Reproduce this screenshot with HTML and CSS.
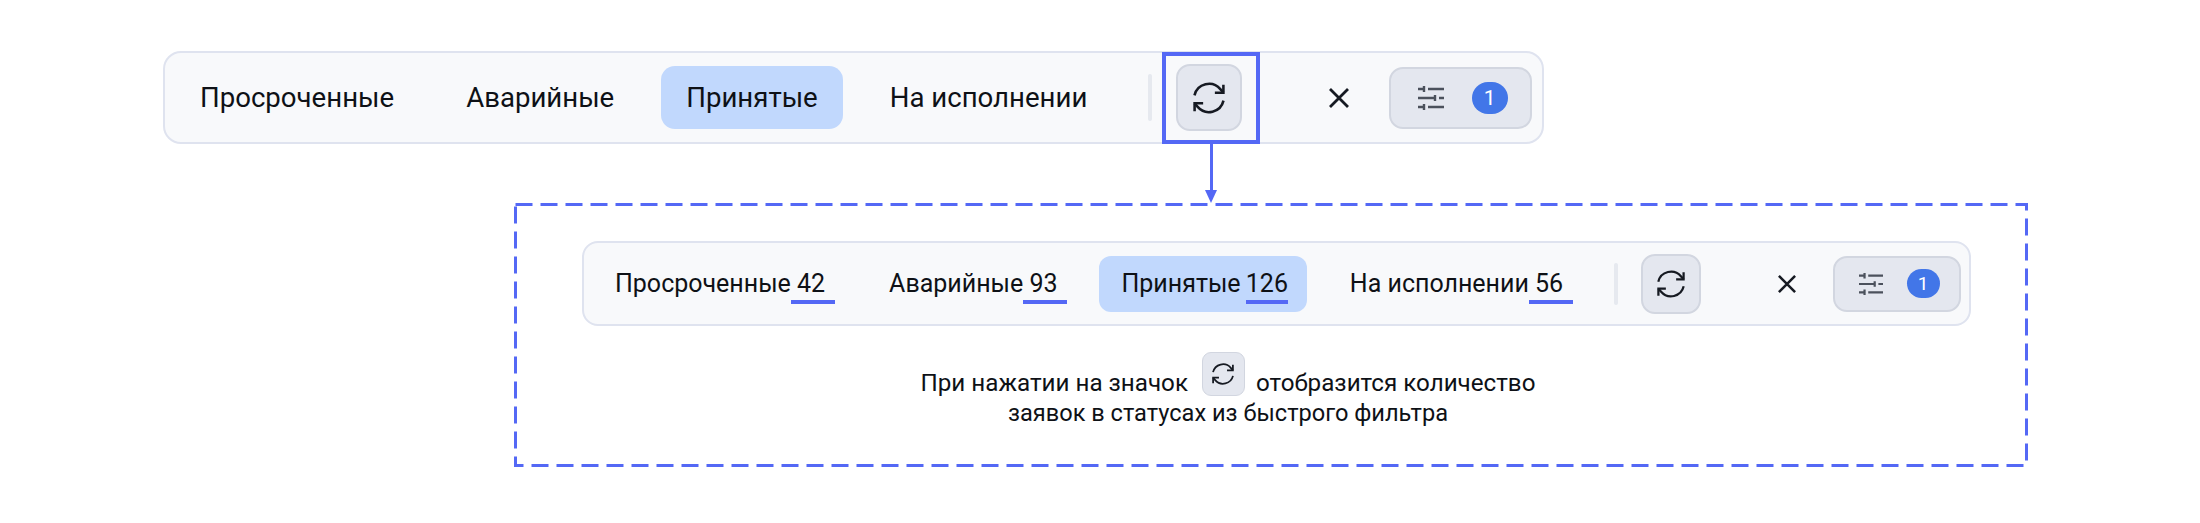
FILE: index.html
```html
<!DOCTYPE html>
<html lang="ru">

<head>
    <meta charset="UTF-8">
    <title>Быстрый фильтр</title>
    <link rel="stylesheet" href="styles.css">
</head>

<body>
    <svg class="icon-defs" width="0" height="0">
        <symbol id="icon-refresh" viewBox="0 0 30 30">
            <path d="M1.4 12.5A14 14 0 0 1 25.6 6.6L28.5 10" />
            <path d="M28.6 17.5A14 14 0 0 1 4.4 23.4L1.5 20" />
            <path d="M28.5 2.5V10H20.5" />
            <path d="M1.5 27.5V20H9.5" />
        </symbol>
        <symbol id="icon-filter" viewBox="0 0 26 26">
            <path d="M0 4H6M6 1V7M10 4H26" />
            <path d="M0 13H17M17 10V16M21 13H26" />
            <path d="M0 22H6M6 19V25M10 22H26" />
        </symbol>
        <symbol id="icon-close" viewBox="0 0 20 20">
            <path d="M1 1L19 19M19 1L1 19" />
        </symbol>
    </svg>

    <div class="bar">
        <div class="tab">Просроченные</div>
        <div class="tab">Аварийные</div>
        <div class="tab active">Принятые</div>
        <div class="tab">На исполнении</div>
        <div class="divider"></div>
        <div class="btn-refresh"><svg class="icon-refresh"><use href="#icon-refresh" /></svg></div>
        <div class="btn-close"><svg class="icon-close"><use href="#icon-close" /></svg></div>
        <div class="btn-filter">
            <svg class="icon-filter"><use href="#icon-filter" /></svg>
            <span class="badge">1</span>
        </div>
        <div class="highlight"></div>
        <div class="arrow"></div>
    </div>

    <div class="result">
        <svg class="dashes" width="1514" height="264">
            <rect x="1.5" y="1.5" width="1511" height="261" />
        </svg>
        <div class="bar small">
            <div class="tab">Просроченные <span class="count">42</span></div>
            <div class="tab">Аварийные <span class="count">93</span></div>
            <div class="tab active">Принятые <span class="count">126</span></div>
            <div class="tab">На исполнении <span class="count">56</span></div>
            <div class="divider"></div>
            <div class="btn-refresh"><svg class="icon-refresh"><use href="#icon-refresh" /></svg></div>
            <div class="btn-close"><svg class="icon-close"><use href="#icon-close" /></svg></div>
            <div class="btn-filter">
                <svg class="icon-filter"><use href="#icon-filter" /></svg>
                <span class="badge">1</span>
            </div>
        </div>
        <p class="note">
            <span class="note-first">При нажатии на значок
            <span class="mini-refresh"><svg class="icon-refresh"><use href="#icon-refresh" /></svg></span>
            отобразится количество</span><br>
            заявок в статусах из быстрого фильтра
        </p>
    </div>
</body>

</html>
```

FILE: styles.css
```css
body {
    margin: 0;
    background-color: #ffffff;
    color: #0e1116;
    font-family: Roboto, "Liberation Sans", sans-serif;
}

.icon-defs {
    position: absolute;
}

symbol path {
    fill: none;
    stroke: currentColor;
    stroke-width: 2.4;
}

#icon-close path {
    stroke-width: 2.8;
}

.bar {
    position: relative;
    display: flex;
    align-items: center;
    box-sizing: border-box;
    width: 1381px;
    height: 93px;
    margin: 51px 0 0 163px;
    padding: 0 10px 0 10px;
    background-color: #f8f9fb;
    border: 2px solid #dfe3ef;
    border-radius: 18px;
}

.tab {
    height: 63px;
    padding: 0 25px;
    margin-right: 22px;
    font-size: 27.6px;
    line-height: 63px;
    white-space: nowrap;
    border-radius: 14px;
}

.tab.active {
    background-color: #c1d8fd;
}

.divider {
    width: 4px;
    height: 47px;
    margin: 0 24px 0 14px;
    background-color: #e6e9ef;
    border-radius: 2px;
}

.btn-refresh {
    display: flex;
    align-items: center;
    justify-content: center;
    box-sizing: border-box;
    width: 67px;
    height: 67px;
    background-color: #e4e7ef;
    border: 2px solid #d2d6e0;
    border-radius: 14px;
}

.icon-refresh {
    width: 32px;
    height: 32px;
    color: #161a22;
}

.btn-close {
    display: flex;
    box-sizing: border-box;
    width: 147px;
    padding-left: 87px;
    color: #161a22;
}

.icon-close {
    width: 20px;
    height: 20px;
}

.btn-filter {
    display: flex;
    align-items: center;
    box-sizing: border-box;
    width: 145px;
    height: 62px;
    padding-left: 27px;
    background-color: #e4e7ef;
    border: 2px solid #d2d6e0;
    border-radius: 14px;
}

.icon-filter {
    width: 26px;
    height: 26px;
    color: #4b515c;
}

.badge {
    display: flex;
    align-items: center;
    justify-content: center;
    width: 36px;
    height: 32px;
    margin-left: 28px;
    color: #ffffff;
    background-color: #4276e8;
    border-radius: 18px;
    font-size: 21px;
}

.highlight {
    position: absolute;
    left: 997px;
    top: -1px;
    width: 98px;
    height: 92px;
    box-sizing: border-box;
    border: 4px solid #5468f5;
}

.arrow {
    position: absolute;
    left: 1045px;
    top: 91px;
    width: 3px;
    height: 46px;
    background-color: #5468f5;
}

.arrow::after {
    content: "";
    position: absolute;
    left: -5px;
    bottom: -13px;
    border-left: 6.5px solid transparent;
    border-right: 6.5px solid transparent;
    border-top: 13px solid #5468f5;
}

.result {
    position: relative;
    box-sizing: border-box;
    width: 1514px;
    height: 264px;
    margin: 59px 0 0 514px;
    padding: 38px 0 0 68px;
}

.dashes {
    position: absolute;
    left: 0;
    top: 0;
}

.dashes rect {
    fill: none;
    stroke: #5468f5;
    stroke-width: 3;
    stroke-dasharray: 17 8;
}

.bar.small {
    width: 1389px;
    height: 85px;
    margin: 0;
    padding: 0 8px 0 9px;
    border-radius: 16px;
}

.small .tab {
    height: 56px;
    padding: 0 18px 0 22px;
    margin-right: 14px;
    font-size: 25px;
    line-height: 56px;
    border-radius: 12px;
}

.small .tab.active {
    padding-right: 19px;
    margin-right: 21px;
}

.count {
    position: relative;
    display: inline-block;
    box-sizing: border-box;
    width: 44px;
    padding-right: 4px;
    margin-left: -6px;
    text-align: center;
}

.active .count {
    width: 42px;
    padding-right: 0;
    margin-left: -1px;
}

.count::after {
    content: "";
    position: absolute;
    left: 0;
    right: 0;
    bottom: 8px;
    height: 4px;
    background-color: #5468f5;
}

.small .divider {
    height: 42px;
    margin: 0 23px 0 9px;
}

.small .btn-refresh {
    width: 60px;
    height: 60px;
}

.small .icon-refresh {
    width: 28px;
    height: 28px;
}

.small .btn-close {
    width: 132px;
    padding-left: 77px;
}

.small .btn-filter {
    width: 129px;
    height: 56px;
    padding-left: 24px;
}

.small .icon-close {
    width: 18px;
    height: 18px;
}

.small .icon-filter {
    width: 24px;
    height: 24px;
}

.small .badge {
    width: 33px;
    height: 29px;
    margin-left: 24px;
    font-size: 19px;
}

.note {
    width: 640px;
    margin: 42px 0 0 326px;
    font-size: 23.6px;
    line-height: 30px;
    text-align: center;
}

.note-first {
    font-size: 24.2px;
}

.mini-refresh {
    display: inline-flex;
    align-items: center;
    justify-content: center;
    box-sizing: border-box;
    width: 43px;
    height: 44px;
    margin: -22px 5px 0 8px;
    vertical-align: middle;
    background-color: #e4e7ef;
    border: 1px solid #d2d6e0;
    border-radius: 9px;
}

.mini-refresh .icon-refresh {
    width: 22px;
    height: 22px;
}
```
